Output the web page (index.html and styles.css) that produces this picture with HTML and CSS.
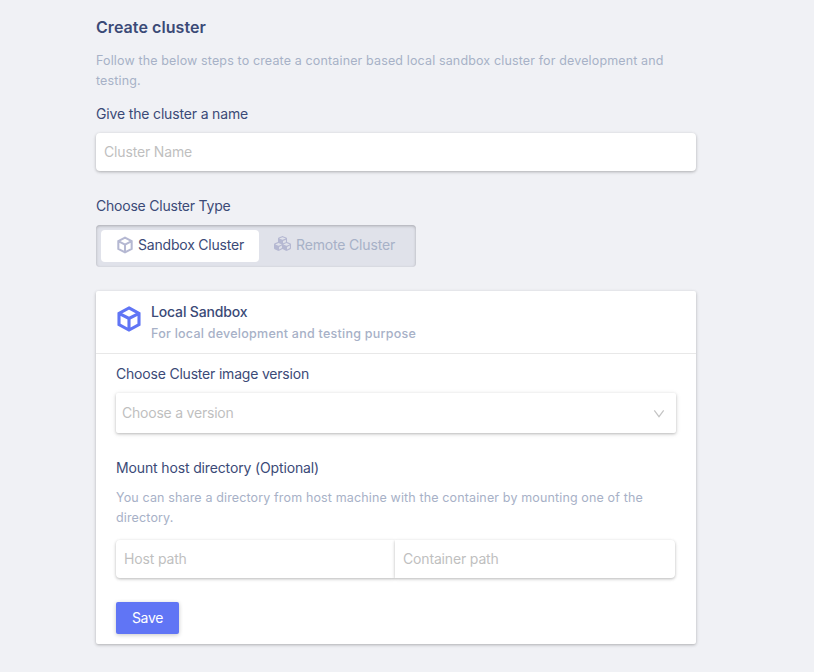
FILE: index.html
```html
<!DOCTYPE html>
<html lang="en">
<head>
<meta charset="utf-8">
<title>Create cluster</title>
<link rel="stylesheet" href="styles.css">
</head>
<body>
<svg width="0" height="0" class="defs" aria-hidden="true">
  <symbol id="cube" viewBox="0 0 24 26">
    <path fill="none" stroke="currentColor" stroke-width="3.100" stroke-linejoin="miter" d="M12 1.900 22 7.300V18.700L12 24.100 2 18.700V7.300ZM2 7.300 12 12.400 22 7.300M12 12.400V24"/>
  </symbol>
  <symbol id="cubes" viewBox="0 0 512 512">
    <path fill="currentColor" d="M488.600 250.200L392 214V105.500c0-15-9.300-28.400-23.400-33.700l-100-37.500c-8.100-3.100-17.100-3.100-25.300 0l-100 37.500c-14.100 5.300-23.400 18.700-23.400 33.700V214l-96.600 36.200C9.300 255.500 0 268.900 0 283.900V394c0 13.600 7.700 26.100 19.900 32.200l100 50c10.100 5.100 22.100 5.100 32.200 0l103.900-52 103.900 52c10.100 5.100 22.100 5.100 32.200 0l100-50c12.200-6.100 19.900-18.600 19.900-32.200V283.900c0-15-9.300-28.400-23.400-33.700zM358 214.800l-85 31.900v-68.200l85-37v73.300zM154 104.100l102-38.200 102 38.200v.6l-102 41.400-102-41.400v-.6zm84 291.100l-85 42.500v-79.100l85-38.800v75.400zm0-112l-102 41.400-102-41.400v-.6l102-38.200 102 38.200v.6zm240 112l-85 42.500v-79.100l85-38.800v75.400zm0-112l-102 41.400-102-41.400v-.6l102-38.200 102 38.200v.6z"/>
  </symbol>
</svg>
<main class="page">
  <h1 class="title">Create cluster</h1>
  <p class="hint">Follow the below steps to create a container based local sandbox cluster for development and testing.</p>
  <label class="label name-label" for="name">Give the cluster a name</label>
  <input class="input" id="name" placeholder="Cluster Name">
  <div class="label type-label">Choose Cluster Type</div>
  <div class="toggle">
    <button class="option selected"><svg class="icon-cube"><use href="#cube"/></svg><span>Sandbox Cluster</span></button>
    <button class="option"><svg class="icon-cubes"><use href="#cubes"/></svg><span>Remote Cluster</span></button>
  </div>
  <section class="card">
    <header class="card-header">
      <svg class="icon-local"><use href="#cube"/></svg>
      <div>
        <h2 class="card-title">Local Sandbox</h2>
        <p class="card-subtitle">For local development and testing purpose</p>
      </div>
    </header>
    <div class="card-body">
      <div class="label version-label">Choose Cluster image version</div>
      <div class="select">
        <span>Choose a version</span>
        <svg class="chevron" viewBox="0 0 12 10"><path d="M1.300 1.300 6 7.700 10.700 1.300" fill="none" stroke="currentColor" stroke-width="1.200"/></svg>
      </div>
      <div class="label mount-label">Mount host directory (Optional)</div>
      <p class="hint mount-hint">You can share a directory from host machine with the container by mounting one of the directory.</p>
      <div class="paths">
        <input class="input host" placeholder="Host path">
        <input class="input container" placeholder="Container path">
      </div>
      <button class="save">Save</button>
    </div>
  </section>
</main>
</body>
</html>
```
FILE: styles.css
```css
* { box-sizing: border-box; }
body {
  margin: 0;
  min-height: 100vh;
  background: #f0f1f5;
  color: #3b4a77;
  font: 14px/20px Inter, "Liberation Sans", sans-serif;
  letter-spacing: -.16px;
}
h1, h2, p { margin: 0; }
button, input { font: inherit; letter-spacing: inherit; border: 0; margin: 0; }
.defs { position: absolute; }
.page { width: 600px; margin-left: 96px; padding-top: 17px; }
.title { font-size: 16px; font-weight: 600; line-height: 20px; letter-spacing: .07px; }
.hint { margin-top: 14px; font-size: 12.5px; color: #a7b1c7; letter-spacing: .14px; }
.label { display: block; }
.name-label { margin-top: 13px; }
.input {
  display: block;
  width: 100%;
  height: 38px;
  margin-top: 9px;
  padding: 0 8px 1px;
  border-radius: 4px;
  background: #fff;
  color: #3b4a77;
  box-shadow: 0 1px 3px rgba(0, 0, 0, .24), 0 1px 5px rgba(0, 0, 0, .06);
}
.input::placeholder { color: #bfbfbf; opacity: 1; }
.type-label { margin-top: 25px; letter-spacing: -.22px; }
.toggle {
  display: flex;
  width: 320px;
  height: 42px;
  margin-top: 9px;
  padding: 5px;
  border-radius: 4px;
  background: #e0e2ea;
  box-shadow: inset 0 1px 3px rgba(0, 0, 0, .25);
}
.option {
  display: flex;
  align-items: center;
  height: 32px;
  padding: 0 0 2px 15px;
  border-radius: 4px;
  background: none;
  color: #a7b1c7;
  white-space: nowrap;
}
.selected { width: 158px; padding-left: 16px; background: #fff; color: #3b4a77; letter-spacing: -.2px; }
.icon-cube { width: 16px; height: 18px; margin-right: 5px; color: #b5b8d2; }
.icon-cubes { width: 17px; height: 17px; margin: -3px 5px 0 0; color: #b5b8d2; }
.card {
  height: 353px;
  margin-top: 24px;
  border-radius: 2px;
  background: #fff;
  box-shadow: 0 1px 3px rgba(0, 0, 0, .24), 0 1px 5px rgba(0, 0, 0, .05);
}
.card-header {
  display: flex;
  height: 63px;
  padding: 11px 21px 0;
  border-bottom: 1px solid #e8e8e8;
}
.icon-local { width: 24px; height: 26px; margin: 4px 10px 0 0; color: #6075f5; }
.card-title { font-size: 14px; font-weight: 500; line-height: 20px; }
.card-subtitle { margin-top: 2px; font-size: 12.5px; font-weight: 500; color: #a7b1c7; letter-spacing: .25px; }
.card-body { padding: 10px 20px; }
.version-label { letter-spacing: -.2px; }
.select {
  display: flex;
  align-items: center;
  justify-content: space-between;
  height: 40px;
  margin-top: 9px;
  padding: 0 11px 0 6px;
  border-radius: 2px;
  color: #bfbfbf;
  letter-spacing: -.22px;
  box-shadow: 0 1px 3px rgba(0, 0, 0, .24), 0 1px 6px rgba(0, 0, 0, .07);
}
.chevron { width: 12px; height: 10px; margin-top: 2px; color: #c4c4c4; }
.mount-label { margin-top: 25px; letter-spacing: -.14px; }
.mount-hint { margin-top: 10px; }
.paths { display: flex; width: 559px; margin-top: 12px; }
.paths .input { margin: 0; }
.paths .host { width: 279px; border-radius: 4px 0 0 4px; }
.paths .container { width: 280px; border-radius: 0 4px 4px 0; }
.save {
  display: block;
  width: 63px;
  height: 32px;
  margin-top: 24px;
  padding: 0;
  border-radius: 2px;
  background: #6075f5;
  color: #fff;
  letter-spacing: -.3px;
  box-shadow: 0 1px 4px rgba(0, 0, 0, .22);
}
```
